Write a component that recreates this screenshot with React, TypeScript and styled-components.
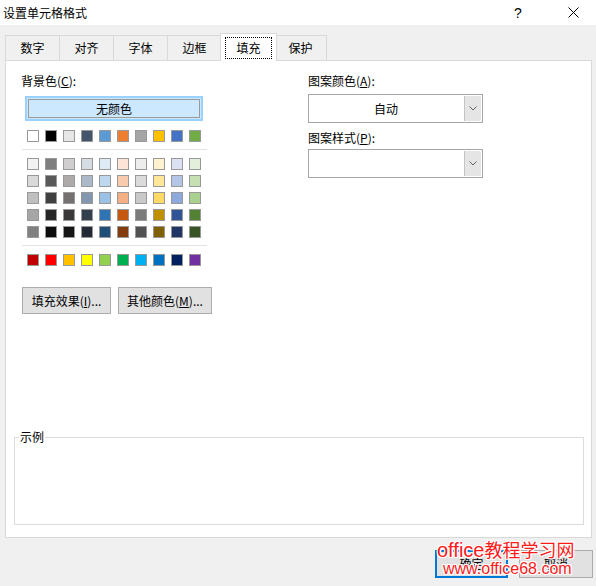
import styled, { createGlobalStyle } from "styled-components";

const GlobalStyle = createGlobalStyle`
  html, body { margin: 0; padding: 0; }
  body {
    font-family: "Noto Sans CJK SC", "Noto Sans", sans-serif;
    font-size: 12px;
    color: #000;
    background: #f0f0f0;
  }
`;

const themeColors = [
  "#FFFFFF", "#000000", "#E7E6E6", "#44546A", "#5B9BD5",
  "#ED7D31", "#A5A5A5", "#FFC000", "#4472C4", "#70AD47",
];

const tintRows = [
  ["#F2F2F2", "#7F7F7F", "#D0CECE", "#D6DCE4", "#DDEBF7", "#FCE4D6", "#EDEDED", "#FFF2CC", "#D9E1F2", "#E2EFDA"],
  ["#D9D9D9", "#595959", "#AEAAAA", "#ACB9CA", "#BDD7EE", "#F8CBAD", "#DBDBDB", "#FFE699", "#B4C6E7", "#C6E0B4"],
  ["#BFBFBF", "#404040", "#757171", "#8497B0", "#9BC2E6", "#F4B084", "#C9C9C9", "#FFD966", "#8EA9DB", "#A9D08E"],
  ["#A6A6A6", "#262626", "#3A3838", "#333F4F", "#2F75B5", "#C65911", "#7B7B7B", "#BF8F00", "#305496", "#548235"],
  ["#808080", "#0D0D0D", "#161616", "#222B35", "#1F4E78", "#833C0C", "#525252", "#806000", "#203764", "#375623"],
];

const standardColors = [
  "#C00000", "#FF0000", "#FFC000", "#FFFF00", "#92D050",
  "#00B050", "#00B0F0", "#0070C0", "#002060", "#7030A0",
];

const tabs = [
  { label: "数字", width: 55 },
  { label: "对齐", width: 55 },
  { label: "字体", width: 55 },
  { label: "边框", width: 55 },
  { label: "填充", width: 57, active: true },
  { label: "保护", width: 53 },
];

export default function App() {
  return (
    <>
      <GlobalStyle />
      <Dialog>
        <TitleBar>
          <Title>设置单元格格式</Title>
          <HelpGlyph>?</HelpGlyph>
          <CloseButton>
            <svg width="11" height="11" viewBox="0 0 11 11">
              <path d="M0.5 0.5 L10.5 10.5 M10.5 0.5 L0.5 10.5" stroke="#000" strokeWidth="1" fill="none" />
            </svg>
          </CloseButton>
        </TitleBar>

        <TabRow>
          {tabs.map((t) => (
            <Tab key={t.label} $active={t.active} $width={t.width}>
              {t.active ? <FocusRing>{t.label}</FocusRing> : t.label}
            </Tab>
          ))}
        </TabRow>

        <Panel>
          <TopSection>
            <LeftCol>
              <Label>
                背景色(<U>C</U>):
              </Label>
              <NoColorButton>
                <NoColorInner>无颜色</NoColorInner>
              </NoColorButton>
              <SwatchRow $top={9}>
                {themeColors.map((c, i) => (
                  <Swatch key={i} $color={c} />
                ))}
              </SwatchRow>
              <Separator $top={7} />
              <TintGrid>
                {tintRows.map((row, r) => (
                  <SwatchRow key={r} $top={0}>
                    {row.map((c, i) => (
                      <Swatch key={i} $color={c} />
                    ))}
                  </SwatchRow>
                ))}
              </TintGrid>
              <Separator $top={7} />
              <SwatchRow $top={8}>
                {standardColors.map((c, i) => (
                  <Swatch key={i} $color={c} />
                ))}
              </SwatchRow>
              <ButtonRow>
                <ActionButton $width={89}>
                  填充效果(<U>I</U>)...
                </ActionButton>
                <ActionButton $width={94}>
                  其他颜色(<U>M</U>)...
                </ActionButton>
              </ButtonRow>
            </LeftCol>

            <RightCol>
              <Label>
                图案颜色(<U>A</U>):
              </Label>
              <Combo $top={5}>
                <ComboValue>自动</ComboValue>
                <DropButton>
                  <Chevron />
                </DropButton>
              </Combo>
              <Label $top={7}>
                图案样式(<U>P</U>):
              </Label>
              <Combo $top={3}>
                <ComboValue />
                <DropButton>
                  <Chevron />
                </DropButton>
              </Combo>
            </RightCol>
          </TopSection>

          <Sample>
            <SampleLegend>示例</SampleLegend>
          </Sample>
        </Panel>

        <BottomBar>
          <DialogButton $primary $width={73}>确定</DialogButton>
          <DialogButton $width={74}>取消</DialogButton>
        </BottomBar>

        <Watermark>
          <WatermarkTitle>
            office<WatermarkCjk>教程学习网</WatermarkCjk>
          </WatermarkTitle>
          <WatermarkUrl>www.office68.com</WatermarkUrl>
        </Watermark>
      </Dialog>
    </>
  );
}

function Chevron() {
  return (
    <svg width="8" height="5" viewBox="0 0 8 5">
      <polyline points="0.5,0.5 4,4 7.5,0.5" stroke="#606060" strokeWidth="1" fill="none" />
    </svg>
  );
}

const Dialog = styled.div`
  position: relative;
  width: 596px;
  height: 586px;
  background: #f0f0f0;
  display: flex;
  flex-direction: column;
  overflow: hidden;
`;

const TitleBar = styled.div`
  height: 25px;
  background: #fff;
  display: flex;
  align-items: center;
  padding-left: 3px;
  line-height: 16px;
`;

const Title = styled.div`
  flex: 1;
`;

const HelpGlyph = styled.div`
  width: 12px;
  margin-right: 26px;
  text-align: center;
  font-family: "Liberation Sans", sans-serif;
  font-size: 14px;
`;

const CloseButton = styled.div`
  width: 46px;
  display: flex;
  justify-content: center;
`;

const TabRow = styled.div`
  position: relative;
  z-index: 1;
  display: flex;
  align-items: flex-end;
  margin-top: 8px;
  margin-bottom: -1px;
  padding-left: 5px;
`;

const Tab = styled.div<{ $active?: boolean; $width: number }>`
  position: relative;
  z-index: ${(p) => (p.$active ? 2 : 0)};
  box-sizing: border-box;
  width: ${(p) => p.$width}px;
  height: ${(p) => (p.$active ? 28 : 26)}px;
  margin-left: ${(p) => (p.$active ? -2 : -1)}px;
  margin-right: ${(p) => (p.$active ? -2 : 0)}px;
  border: 1px solid #d9d9d9;
  border-bottom: ${(p) => (p.$active ? "none" : "1px solid #d9d9d9")};
  background: ${(p) => (p.$active ? "#fff" : "#f0f0f0")};
  display: flex;
  align-items: ${(p) => (p.$active ? "flex-start" : "center")};
  justify-content: center;
  padding-top: ${(p) => (p.$active ? 3 : 0)}px;
  line-height: 16px;

  &:first-child {
    margin-left: 0;
  }
`;

const FocusRing = styled.div`
  box-sizing: border-box;
  width: 47px;
  height: 22px;
  border: 1px dotted #000;
  display: flex;
  align-items: center;
  justify-content: center;
`;

const Panel = styled.div`
  box-sizing: border-box;
  width: 587px;
  height: 478px;
  margin-left: 5px;
  background: #fff;
  border: 1px solid #d9d9d9;
  display: flex;
  flex-direction: column;
`;

const TopSection = styled.div`
  display: grid;
  grid-template-columns: 287px 175px;
  padding: 12px 0 0 15px;
`;

const LeftCol = styled.div`
  display: flex;
  flex-direction: column;
`;

const RightCol = styled.div`
  display: flex;
  flex-direction: column;
`;

const Label = styled.div<{ $top?: number }>`
  line-height: 16px;
  height: 16px;
  margin-top: ${(p) => p.$top ?? 0}px;
`;

const U = styled.span`
  text-decoration: underline;
  text-underline-offset: 1px;
`;

const NoColorButton = styled.div`
  box-sizing: border-box;
  width: 178px;
  height: 25px;
  margin: 7px 0 0 4px;
  border: 2px solid #99d1ff;
  background: #cce8ff;
  padding: 1px;
`;

const NoColorInner = styled.div`
  box-sizing: border-box;
  height: 100%;
  border: 1px solid #9a9a9a;
  display: flex;
  align-items: center;
  justify-content: center;
  line-height: 16px;
`;

const SwatchRow = styled.div<{ $top: number }>`
  display: flex;
  gap: 6px;
  margin: ${(p) => p.$top}px 0 0 6px;
`;

const Swatch = styled.div<{ $color: string }>`
  box-sizing: border-box;
  width: 12px;
  height: 12px;
  border: 1px solid #999;
  background: ${(p) => p.$color};
`;

const Separator = styled.div<{ $top: number }>`
  width: 185px;
  height: 1px;
  margin: ${(p) => p.$top}px 0 0 1px;
  background: #e3e3e3;
`;

const TintGrid = styled.div`
  display: flex;
  flex-direction: column;
  gap: 5px;
  margin-top: 8px;
`;

const ButtonRow = styled.div`
  display: flex;
  gap: 7px;
  margin: 21px 0 0 1px;
`;

const ActionButton = styled.button<{ $width: number }>`
  box-sizing: border-box;
  width: ${(p) => p.$width}px;
  height: 27px;
  padding: 0;
  border: 1px solid #adadad;
  background: #e1e1e1;
  font: inherit;
  color: #000;
  line-height: 16px;
`;

const Combo = styled.div<{ $top: number }>`
  box-sizing: border-box;
  width: 175px;
  height: 29px;
  margin-top: ${(p) => p.$top}px;
  border: 1px solid #a6a6a6;
  background: #fff;
  display: flex;
`;

const ComboValue = styled.div`
  flex: 1;
  display: flex;
  align-items: center;
  justify-content: center;
  line-height: 16px;
`;

const DropButton = styled.div`
  box-sizing: border-box;
  width: 17px;
  margin: 1px;
  border-left: 1px solid #c4c4c4;
  background: #e5e5e5;
  display: flex;
  align-items: center;
  justify-content: center;
`;

const Sample = styled.fieldset`
  box-sizing: border-box;
  height: 96px;
  min-width: 0;
  margin: auto 7px 12px 8px;
  padding: 0;
  border: 1px solid #dcdcdc;
`;

const SampleLegend = styled.legend`
  margin-left: 4px;
  padding: 0 1px;
  line-height: 16px;
`;

const BottomBar = styled.div`
  display: flex;
  justify-content: flex-end;
  gap: 11px;
  margin-top: 12px;
  padding-right: 3px;
`;

const DialogButton = styled.button<{ $primary?: boolean; $width: number }>`
  box-sizing: border-box;
  width: ${(p) => p.$width}px;
  height: 28px;
  padding: 0;
  border: ${(p) => (p.$primary ? "2px solid #0078d7" : "1px solid #adadad")};
  background: #e1e1e1;
  font: inherit;
  color: #000;
  line-height: 16px;
`;

const Watermark = styled.div`
  position: absolute;
  left: 437px;
  top: 539px;
  color: #ff1a1a;
  font-family: "Liberation Sans", "Noto Sans CJK SC", sans-serif;
  text-shadow: 1px 0 #fff, -1px 0 #fff, 0 1px #fff, 0 -1px #fff,
    1px 1px #fff, -1px -1px #fff, 1px -1px #fff, -1px 1px #fff;
  pointer-events: none;
`;

const WatermarkTitle = styled.div`
  font-size: 20px;
  line-height: 20px;
  white-space: nowrap;
`;

const WatermarkCjk = styled.span`
  font-family: "Noto Sans CJK SC", sans-serif;
  font-size: 18px;
`;

const WatermarkUrl = styled.div`
  font-size: 16px;
  line-height: 16px;
  margin-top: 1px;
  padding-left: 6px;
  white-space: nowrap;
`;
